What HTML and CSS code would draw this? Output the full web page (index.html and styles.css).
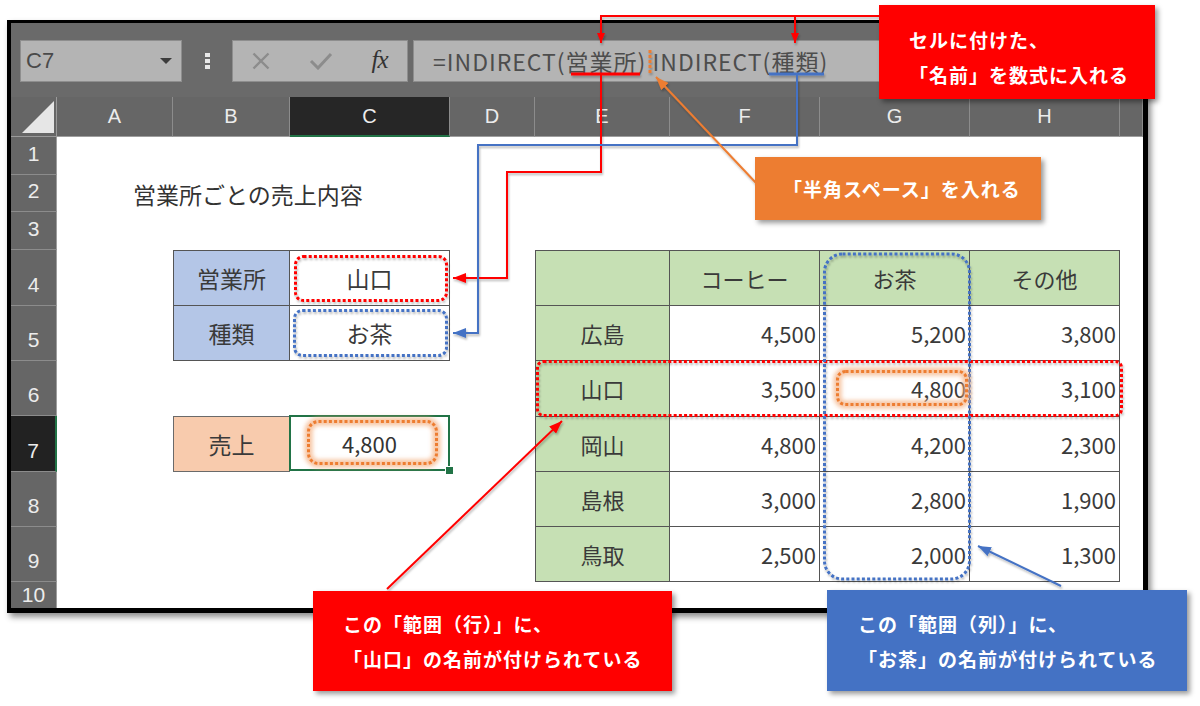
FILE: index.html
```html
<!DOCTYPE html>
<html lang="ja">
<head>
<meta charset="utf-8">
<title>INDIRECT</title>
<link rel="stylesheet" href="styles.css">
</head>
<body>
<div class="page">
  <div class="frame">
    <div class="toolbar">
      <div class="namebox"><span class="nb-text">C7</span><span class="caret"></span></div>
      <div class="grip"><i></i><i></i><i></i></div>
      <div class="btnbox">
        <svg class="ico" width="18" height="18" viewBox="0 0 18 18"><path d="M1.5 1.5 L16.5 16.5 M16.5 1.5 L1.5 16.5" stroke="#8c8c8c" stroke-width="2.4" fill="none"/></svg>
        <svg class="ico" width="24" height="18" viewBox="0 0 24 18"><path d="M2 9 L9 16 L22 2" stroke="#8c8c8c" stroke-width="3" fill="none"/></svg>
        <span class="fx">fx</span>
      </div>
      <div class="formula">=INDIRECT(営業所) INDIRECT(種類)</div>
    </div>
    <div class="sheet">
      <div class="corner"></div>
      <div class="colh">A</div>
      <div class="colh">B</div>
      <div class="colh sel">C</div>
      <div class="colh">D</div>
      <div class="colh">E</div>
      <div class="colh">F</div>
      <div class="colh">G</div>
      <div class="colh">H</div>
      <div class="colh"></div>
      <div class="rowh">1</div>
      <div class="rowh">2</div>
      <div class="rowh">3</div>
      <div class="rowh">4</div>
      <div class="rowh">5</div>
      <div class="rowh">6</div>
      <div class="rowh sel">7</div>
      <div class="rowh">8</div>
      <div class="rowh">9</div>
      <div class="rowh last">10</div>

      <div class="title">営業所ごとの売上内容</div>

      <div class="ltable">
        <div class="cell lbl">営業所</div>
        <div class="cell">山口</div>
        <div class="cell lbl">種類</div>
        <div class="cell">お茶</div>
      </div>

      <div class="sales-lbl">売上</div>
      <div class="sales-val">4,800<span class="handle"></span></div>

      <div class="rtable">
        <div class="cell hd"></div>
        <div class="cell hd">コーヒー</div>
        <div class="cell hd">お茶</div>
        <div class="cell hd">その他</div>

        <div class="cell hd">広島</div>
        <div class="cell num">4,500</div>
        <div class="cell num">5,200</div>
        <div class="cell num">3,800</div>

        <div class="cell hd">山口</div>
        <div class="cell num">3,500</div>
        <div class="cell num">4,800</div>
        <div class="cell num">3,100</div>

        <div class="cell hd">岡山</div>
        <div class="cell num">4,800</div>
        <div class="cell num">4,200</div>
        <div class="cell num">2,300</div>

        <div class="cell hd">島根</div>
        <div class="cell num">3,000</div>
        <div class="cell num">2,800</div>
        <div class="cell num">1,900</div>

        <div class="cell hd">鳥取</div>
        <div class="cell num">2,500</div>
        <div class="cell num">2,000</div>
        <div class="cell num">1,300</div>
      </div>
    </div>
  </div>

  <svg class="overlay" width="1200" height="706" viewBox="0 0 1200 706">
    <defs>
      <marker id="arR" viewBox="0 0 13 10" refX="13" refY="5" markerWidth="13" markerHeight="10" markerUnits="userSpaceOnUse" orient="auto"><path d="M0 0 L13 5 L0 10 Z" fill="#ff0000"/></marker>
      <marker id="arRs" viewBox="0 0 10 8" refX="10" refY="4" markerWidth="10" markerHeight="8" markerUnits="userSpaceOnUse" orient="auto"><path d="M0 0 L10 4 L0 8 Z" fill="#ff0000"/></marker>
      <marker id="arB" viewBox="0 0 13 10" refX="13" refY="5" markerWidth="13" markerHeight="10" markerUnits="userSpaceOnUse" orient="auto"><path d="M0 0 L13 5 L0 10 Z" fill="#4472c4"/></marker>
      <marker id="arO" viewBox="0 0 13 10" refX="13" refY="5" markerWidth="13" markerHeight="10" markerUnits="userSpaceOnUse" orient="auto"><path d="M0 0 L13 5 L0 10 Z" fill="#ed7d31"/></marker>
      <filter id="sh" x="-10%" y="-10%" width="130%" height="130%"><feDropShadow dx="1" dy="2" stdDeviation="1.2" flood-color="#000" flood-opacity="0.28"/></filter>
      <filter id="glow" x="-20%" y="-40%" width="140%" height="180%"><feGaussianBlur stdDeviation="2.2"/></filter>
    </defs>

    <g filter="url(#sh)" fill="none" stroke-width="3" stroke-dasharray="3 2.2">
      <rect x="295.5" y="256.5" width="151" height="44" rx="8" stroke="#ff0000"/>
      <rect x="294.5" y="310.5" width="152" height="45" rx="8" stroke="#4472c4"/>
      <rect x="537.5" y="361.5" width="584" height="54" rx="6" stroke="#ff0000"/>
      <rect x="824.5" y="254" width="145" height="325" rx="18" stroke="#4472c4"/>
    </g>
    <g fill="none">
      <rect x="308.5" y="421.5" width="128" height="42" rx="10" stroke="#f4b183" stroke-width="8" opacity="0.75" filter="url(#glow)"/>
      <rect x="308.5" y="421.5" width="128" height="42" rx="10" stroke="#ed7d31" stroke-width="3" stroke-dasharray="3 2.2"/>
      <rect x="837.5" y="371.5" width="129" height="33" rx="8" stroke="#f4b183" stroke-width="8" opacity="0.75" filter="url(#glow)"/>
      <rect x="837.5" y="371.5" width="129" height="33" rx="8" stroke="#ed7d31" stroke-width="3" stroke-dasharray="3 2.2"/>
    </g>

    <g filter="url(#sh)" fill="none">
      <polyline points="880,16 601,16 601,43" stroke="#ff0000" stroke-width="2" marker-end="url(#arRs)"/>
      <line x1="795" y1="16" x2="795" y2="43" stroke="#ff0000" stroke-width="2" marker-end="url(#arRs)"/>
      <line x1="571" y1="74" x2="640" y2="74" stroke="#ff0000" stroke-width="3"/>
      <polyline points="601,75 601,172 507,172 507,278 453,278" stroke="#ff0000" stroke-width="2" marker-end="url(#arR)"/>
      <line x1="769" y1="74" x2="824" y2="74" stroke="#4472c4" stroke-width="3"/>
      <polyline points="797,75 797,145 478,145 478,333 453,333" stroke="#4472c4" stroke-width="2" marker-end="url(#arB)"/>
      <line x1="650" y1="50" x2="650" y2="74" stroke="#ed7d31" stroke-width="3" stroke-dasharray="3 2"/>
      <line x1="757" y1="184" x2="656" y2="77" stroke="#ed7d31" stroke-width="2" marker-end="url(#arO)"/>
      <line x1="387" y1="589" x2="562" y2="421" stroke="#ff0000" stroke-width="2" marker-end="url(#arR)"/>
      <line x1="1061" y1="586" x2="978" y2="546" stroke="#4472c4" stroke-width="2" marker-end="url(#arB)"/>
    </g>
  </svg>

  <div class="callout c-top">セルに付けた、<br>「名前」を数式に入れる</div>
  <div class="callout c-orange">「半角スペース」を入れる</div>
  <div class="callout c-red">この「範囲（行）」に、<br>「山口」の名前が付けられている</div>
  <div class="callout c-blue">この「範囲（列）」に、<br>「お茶」の名前が付けられている</div>
</div>
</body>
</html>
```

FILE: styles.css
```css
* { box-sizing: border-box; }
html, body { margin: 0; padding: 0; background: #fff; }
body { font-family: "Noto Sans CJK JP", "Noto Sans", sans-serif; }

.page {
  position: relative;
  width: 1200px;
  height: 706px;
  overflow: hidden;
  padding: 20px 0 0 7px;
}

.frame {
  width: 1141px;
  height: 593px;
  border-style: solid;
  border-color: #000;
  border-width: 3px 5px 5px 4px;
  background: #666;
  box-shadow: 3px 4px 6px rgba(0, 0, 0, 0.45);
  display: flex;
  flex-direction: column;
}

/* ---------- toolbar ---------- */
.toolbar {
  height: 74px;
  flex: none;
  display: flex;
  align-items: flex-start;
  padding: 17px 0 0 9px;
  background: #6a6a6a;
}
.namebox {
  width: 162px;
  height: 42px;
  background: #b4b4b4;
  border: 1px solid #8e8e8e;
  display: flex;
  align-items: center;
  justify-content: space-between;
  padding: 0 9px 0 5px;
}
.nb-text {
  font: 22px "Liberation Sans", sans-serif;
  color: #4a4a4a;
}
.caret {
  width: 0;
  height: 0;
  border-left: 6px solid transparent;
  border-right: 6px solid transparent;
  border-top: 6px solid #3c3c3c;
}
.grip {
  width: 50px;
  height: 42px;
  display: flex;
  flex-direction: column;
  align-items: center;
  gap: 2px;
  padding-top: 13px;
}
.grip i {
  display: block;
  width: 5px;
  height: 4px;
  background: #e8e8e8;
}
.btnbox {
  width: 176px;
  height: 42px;
  background: #b4b4b4;
  border: 1px solid #8e8e8e;
  display: flex;
  align-items: center;
  justify-content: space-around;
}
.ico { display: block; }
.fx {
  font: italic 25px "Liberation Serif", serif;
  color: #333;
  letter-spacing: -1px;
  line-height: 1;
  margin-top: -3px;
}
.formula {
  flex: 1;
  height: 42px;
  margin: 0 3px 0 5px;
  background: #b4b4b4;
  border: 1px solid #8e8e8e;
  padding-left: 19px;
  display: flex;
  align-items: center;
  font-size: 23px;
  letter-spacing: 1px;
  color: #4d4d4d;
  white-space: pre;
}

/* ---------- sheet ---------- */
.sheet {
  flex: 1;
  overflow: hidden;
  background: #fff;
  display: grid;
  grid-template-columns: 46px 116px 117px 160px 85px 135px 150px 150px 150px 1fr;
  grid-template-rows: 40px 38px 37px 38px 56px 55px 55px 56px 55px 55px 1fr;
  color: #3a3a3a;
}
.corner {
  position: relative;
  background: #666;
  border-right: 1px solid #9a9a9a;
  border-bottom: 1px solid #9a9a9a;
}
.corner::after {
  content: "";
  position: absolute;
  right: 2px;
  bottom: 3px;
  width: 32px;
  height: 32px;
  background: #e6e6e6;
  clip-path: polygon(100% 0, 100% 100%, 0 100%);
}
.colh {
  background: #666;
  color: #ececec;
  font: 20px "Liberation Sans", sans-serif;
  display: flex;
  align-items: center;
  justify-content: center;
  border-right: 1px solid #8c8c8c;
  border-bottom: 1px solid #9e9e9e;
}
.colh.sel {
  background: #262626;
  border-bottom: 2px solid #217346;
}
.rowh {
  grid-column: 1;
  background: #666;
  color: #ececec;
  font: 21px "Liberation Sans", sans-serif;
  line-height: 24px;
  display: flex;
  align-items: flex-end;
  justify-content: center;
  padding-bottom: 8px;
  border-bottom: 1px solid #8c8c8c;
  border-right: 1px solid #9e9e9e;
}
.rowh.sel {
  background: #222;
  border-right: 2px solid #217346;
}
.rowh.last {
  align-items: center;
  padding-bottom: 0;
  border-bottom: 0;
}

.title {
  grid-row: 3;
  grid-column: 2 / 7;
  padding-left: 76px;
  display: flex;
  align-items: center;
  font-size: 23px;
  color: #333;
}

.cell {
  display: flex;
  align-items: center;
  justify-content: center;
  border-right: 1px solid #555;
  border-bottom: 1px solid #555;
  font-size: 22px;
  color: #3a3a3a;
  background: #fff;
}

.ltable {
  grid-row: 5 / 7;
  grid-column: 3 / 5;
  display: grid;
  grid-template-columns: 116px 160px;
  grid-template-rows: 1fr 1fr;
  border-top: 1px solid #555;
  border-left: 1px solid #555;
}
.ltable .lbl { background: #b4c6e7; }
.ltable .cell { font-size: 23px; }

.sales-lbl {
  grid-row: 8;
  grid-column: 3;
  background: #f8cbad;
  border: 1px solid #6a6a6a;
  display: flex;
  align-items: center;
  justify-content: center;
  font-size: 23px;
  color: #3a3a3a;
}
.sales-val {
  grid-row: 8;
  grid-column: 4;
  position: relative;
  margin: -1px 0 1px -1px;
  border: 2px solid #217346;
  display: flex;
  align-items: center;
  justify-content: center;
  font-size: 22px;
  color: #333;
}
.handle {
  position: absolute;
  right: -5px;
  bottom: -5px;
  width: 7px;
  height: 7px;
  background: #217346;
  outline: 1px solid #fff;
}

.rtable {
  grid-row: 5 / 11;
  grid-column: 6 / 10;
  display: grid;
  grid-template-columns: 134px 150px 150px 150px;
  grid-template-rows: repeat(6, 1fr);
  border-top: 1px solid #555;
  border-left: 1px solid #555;
}
.rtable .hd { background: #c6e0b4; }
.rtable .num {
  justify-content: flex-end;
  padding-right: 3px;
}

/* ---------- overlays ---------- */
.overlay {
  position: absolute;
  left: 0;
  top: 0;
  pointer-events: none;
}

.callout {
  position: absolute;
  color: #fff;
  font-weight: 700;
  font-size: 19px;
  line-height: 35px;
  letter-spacing: 1px;
  white-space: nowrap;
  box-shadow: 3px 3px 5px rgba(0, 0, 0, 0.4);
}
.c-top {
  left: 879px;
  top: 5px;
  width: 276px;
  height: 94px;
  background: #ff0000;
  padding: 17px 0 0 30px;
}
.c-orange {
  left: 755px;
  top: 157px;
  width: 286px;
  height: 63px;
  background: #ed7d31;
  padding-left: 28px;
  display: flex;
  align-items: center;
}
.c-red {
  left: 313px;
  top: 591px;
  width: 359px;
  height: 100px;
  background: #ff0000;
  padding: 15px 0 0 30px;
}
.c-blue {
  left: 827px;
  top: 590px;
  width: 360px;
  height: 101px;
  background: #4472c4;
  padding: 16px 0 0 31px;
}
```
